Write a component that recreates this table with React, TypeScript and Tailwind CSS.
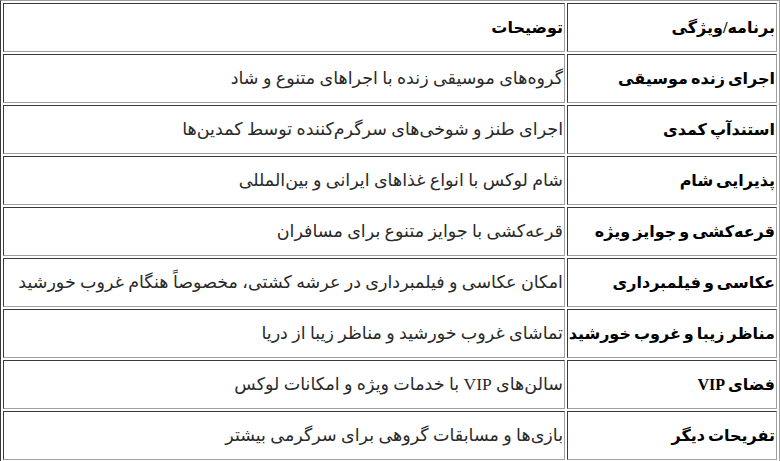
import React from 'react';

const rows = [
  { name: 'اجرای زنده موسیقی', desc: 'گروه‌های موسیقی زنده با اجراهای متنوع و شاد' },
  { name: 'استندآپ کمدی', desc: 'اجرای طنز و شوخی‌های سرگرم‌کننده توسط کمدین‌ها' },
  { name: 'پذیرایی شام', desc: 'شام لوکس با انواع غذاهای ایرانی و بین‌المللی' },
  { name: 'قرعه‌کشی و جوایز ویژه', desc: 'قرعه‌کشی با جوایز متنوع برای مسافران' },
  { name: 'عکاسی و فیلمبرداری', desc: 'امکان عکاسی و فیلمبرداری در عرشه کشتی، مخصوصاً هنگام غروب خورشید' },
  { name: 'مناظر زیبا و غروب خورشید', desc: 'تماشای غروب خورشید و مناظر زیبا از دریا' },
  { name: 'فضای VIP', desc: 'سالن‌های VIP با خدمات ویژه و امکانات لوکس' },
  { name: 'تفریحات دیگر', desc: 'بازی‌ها و مسابقات گروهی برای سرگرمی بیشتر' },
];

const cell =
  'border border-t-[#3a3a3a] border-l-[#3a3a3a] border-b-[#a0a0a0] border-r-[#a0a0a0] px-[1px] h-[49px] text-right align-middle';

export default function App() {
  return (
    <div dir="rtl" className="w-[780px] h-[461px] overflow-hidden bg-white" style={{ fontFamily: '"Liberation Serif", "DejaVu Sans", serif' }}>
      <table className="w-[780px] table-fixed border-separate border-spacing-[2px] border border-t-[#a0a0a0] border-r-[#a0a0a0] border-b-[#3a3a3a] border-l-[#3a3a3a] text-[#2a2a2a]">
        <colgroup>
          <col className="w-[210px]" />
          <col />
        </colgroup>
        <tbody>
          <tr>
            <td className={`${cell} text-[16px] font-bold text-black whitespace-nowrap`}>برنامه/ویژگی</td>
            <td className={`${cell} text-[16px] font-bold text-black`}>توضیحات</td>
          </tr>
          {rows.map((r) => (
            <tr key={r.name}>
              <td className={`${cell} text-[16px] font-bold text-black whitespace-nowrap [word-spacing:-1px]`}>{r.name}</td>
              <td className={`${cell} text-[17.5px]`}>{r.desc}</td>
            </tr>
          ))}
        </tbody>
      </table>
    </div>
  );
}
